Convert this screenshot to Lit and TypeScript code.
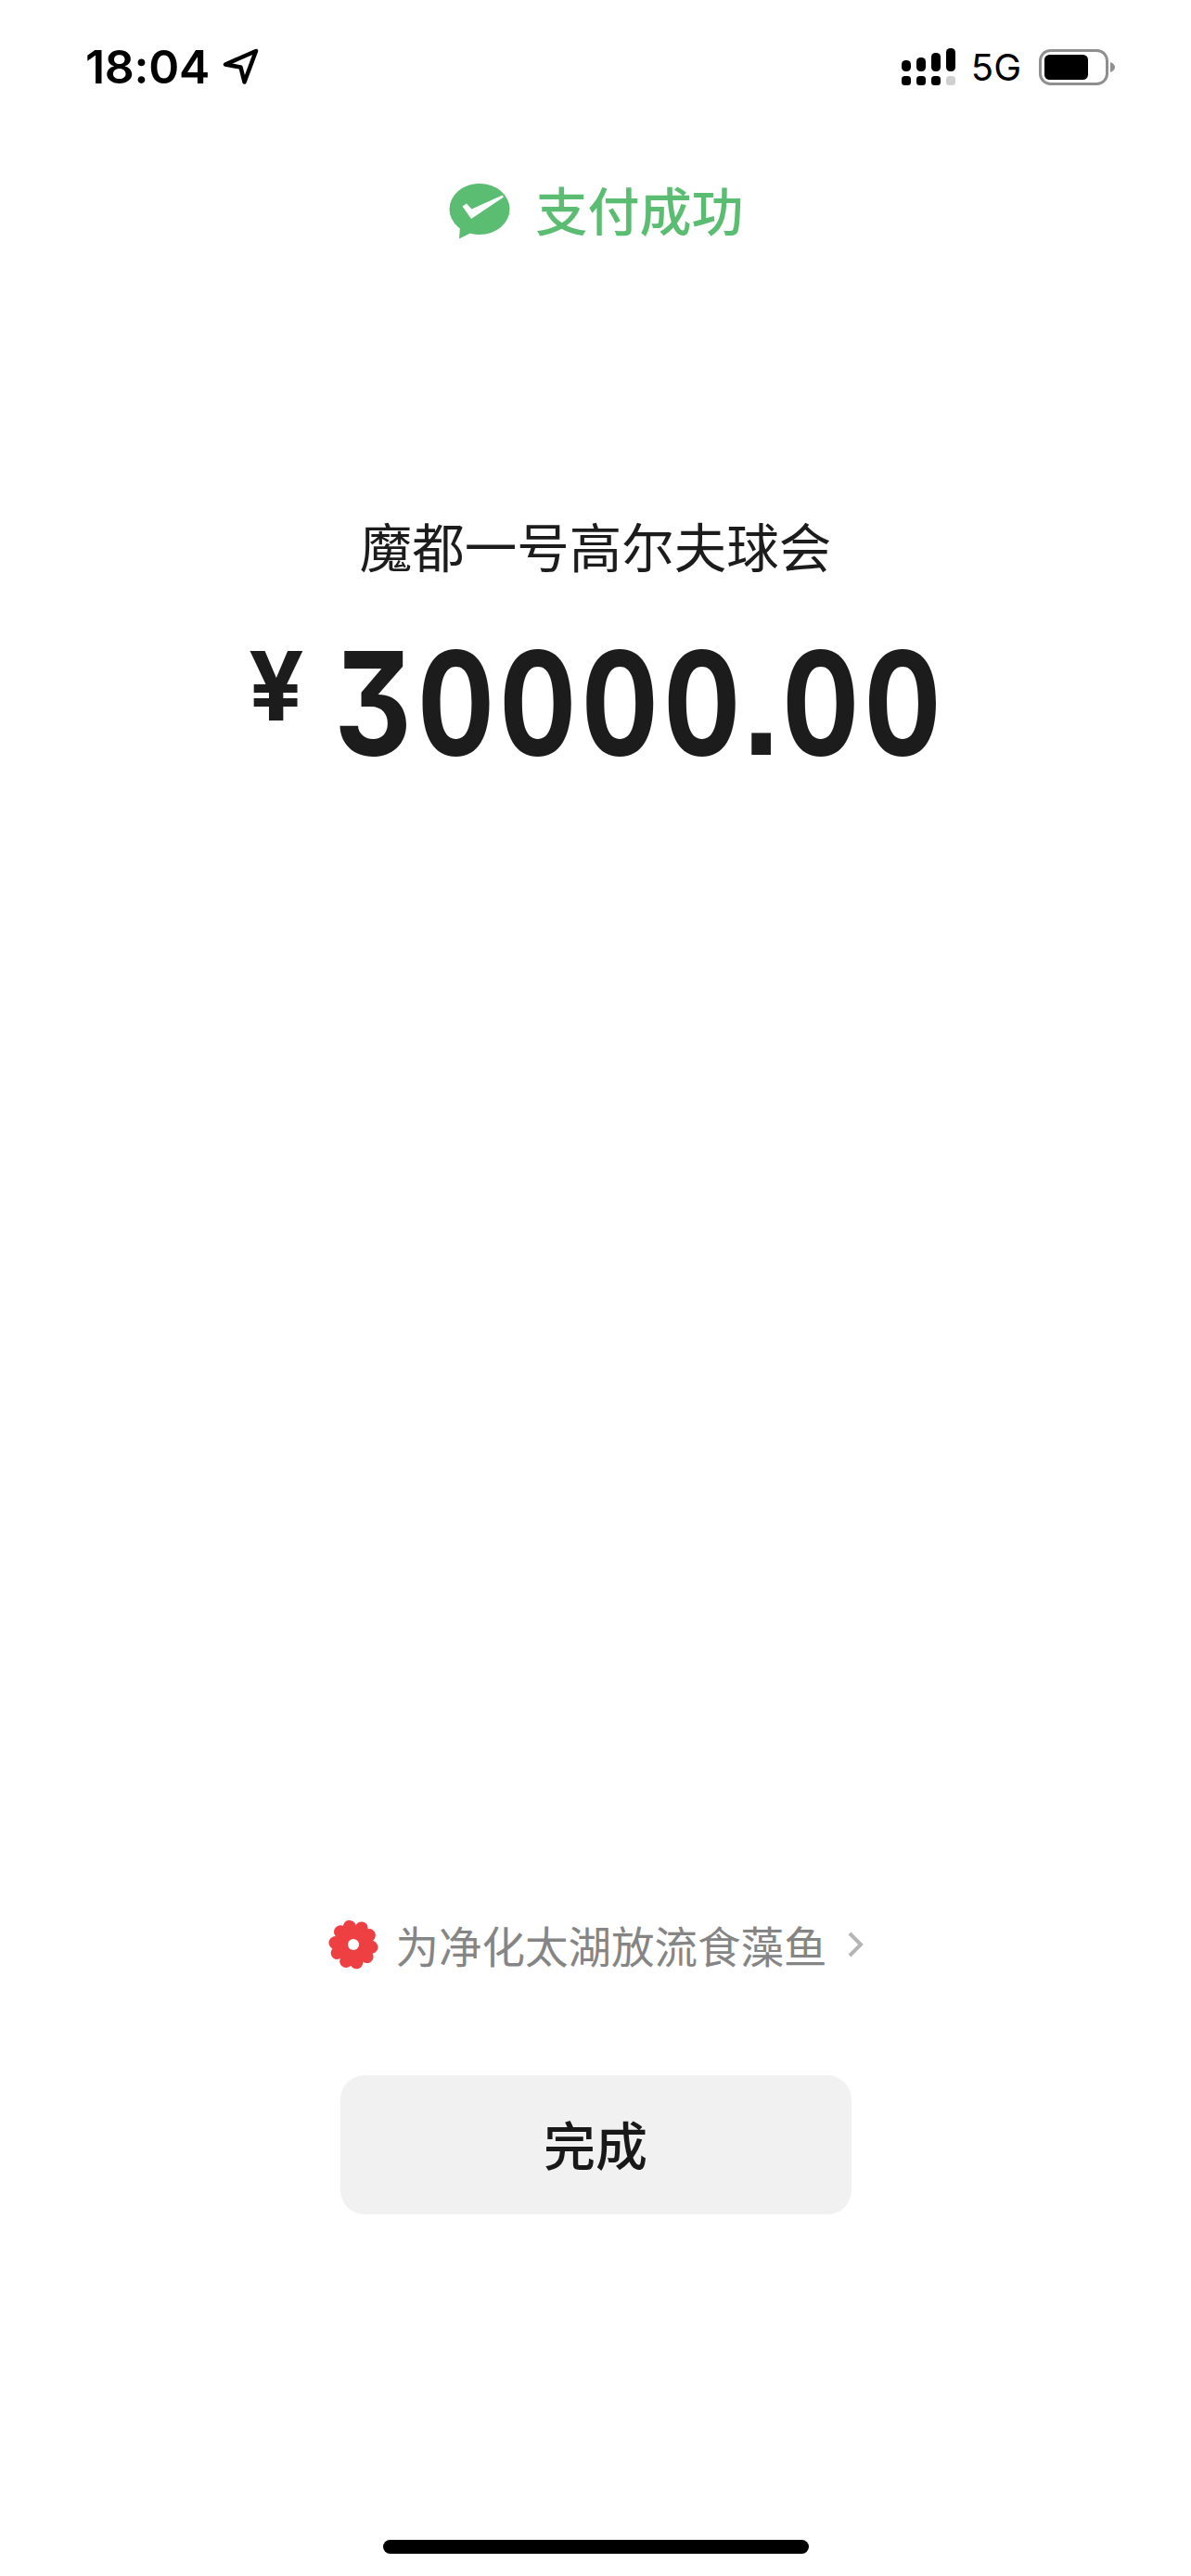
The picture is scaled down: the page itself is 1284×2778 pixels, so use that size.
import { LitElement, html, css, svg } from 'lit';
import { customElement, property } from 'lit/decorators.js';

// status bar glyphs
const arrowIcon = html`<svg class="arrow" width="40" height="40" viewBox="0 0 40 40">
  <path d="M3 17.5 L36 3 L23.5 36.5 L19.5 20.5 Z" fill="none" stroke="#000" stroke-width="4.5" stroke-linejoin="round"/>
</svg>`;

const signalTop = [12, 15, 20, 25];
const signalIcon = html`<svg width="58" height="40" viewBox="0 0 58 40">
  ${signalTop.map((h, i) => svg`
    <rect x=${i * 16} y=${25 - h} width="10" height=${h} rx="4.5" fill="#000"/>
    <rect x=${i * 16} y="30" width="10" height="10" rx="3.5" fill=${i === 3 ? '#cfcfcf' : '#000'}/>
  `)}
</svg>`;

const batteryIcon = html`<svg width="82" height="39" viewBox="0 0 82 39">
  <rect x="1.5" y="1.5" width="72" height="36" rx="11" fill="none" stroke="#8f8f8f" stroke-width="3"/>
  <rect x="6" y="6" width="47" height="27" rx="5.5" fill="#000"/>
  <path d="M77 14 C80 15 82 17 82 19.5 C82 22 80 24 77 25 Z" fill="#8f8f8f"/>
</svg>`;

const wechatIcon = html`<svg width="66" height="60" viewBox="0 0 66 60">
  <ellipse cx="33" cy="27.5" rx="32.5" ry="27.5" fill="#5bbd72"/>
  <path d="M12 46 L11 59.5 L26 52 Z" fill="#5bbd72"/>
  <path d="M14.5 24.5 L19 21.5 L24.5 27.5 L57.5 12.5 L59 14.5 L24 38 Z" fill="#fff"/>
</svg>`;

// five heart shaped petals
const flowerPetals = [7, 79, 151, 223, 295];
const flowerIcon = html`<svg width="54" height="54" viewBox="0 0 54 54">
  ${flowerPetals.map((deg) => svg`<g fill="#ee3f42" transform="rotate(${deg} 27 27)">
    <circle cx="20.5" cy="8.5" r="7"/>
    <circle cx="33.5" cy="8.5" r="7"/>
    <path d="M14 10 L40 10 L31 27 L23 27 Z"/>
  </g>`)}
  <circle cx="27" cy="27" r="11" fill="#ee3f42"/>
  <circle cx="27" cy="27" r="6" fill="#fff"/>
</svg>`;

@customElement('app-root')
export class AppRoot extends LitElement {
  static styles = css`
    :host {
      display: block;
      width: 1284px;
      height: 2778px;
      background: #fff;
      overflow: hidden;
    }

    .page {
      display: flex;
      flex-direction: column;
      align-items: center;
      height: 100%;
      font-family: "Noto Sans CJK SC", "Noto Sans", sans-serif;
    }

    /* Status bar */
    .status {
      display: flex;
      align-items: center;
      justify-content: space-between;
      align-self: stretch;
      box-sizing: border-box;
      height: 144px;
      padding-left: 92px;
      padding-right: 82px;
    }

    .status-left,
    .status-right {
      display: flex;
      align-items: center;
    }

    .time {
      font-family: Inter, sans-serif;
      font-size: 50px;
      font-weight: 600;
      color: #000;
      letter-spacing: -0.3px;
    }

    .arrow {
      margin-left: 14px;
    }

    .network {
      font-family: Inter, sans-serif;
      font-size: 40px;
      color: #000;
      margin: 0 19px 0 17px;
    }

    /* Header */
    .title {
      display: flex;
      align-items: center;
      gap: 28px;
      height: 168px;
      padding-left: 1px;
      font-size: 56px;
      line-height: 62px;
      font-weight: 500;
      color: #5bbd72;
    }

    .title span {
      margin-top: -6px;
    }

    .merchant {
      margin-top: 245px;
      height: 60px;
      line-height: 60px;
      font-size: 56.5px;
      color: #1c1c1c;
      font-weight: 400;
    }

    .amount {
      display: flex;
      align-items: center;
      justify-content: center;
      margin-top: 71px;
      padding-left: 10px;
      height: 140px;
      color: #1c1c1c;
      font-family: Inter, sans-serif;
      font-weight: 650;
      font-size: 154px;
      letter-spacing: 5.7px;
      font-feature-settings: "cv09", "tnum", "ss07";
      transform: scaleX(0.84);
    }

    .currency {
      font-size: 103px;
      font-weight: 700;
      letter-spacing: 0;
      margin-right: 46px;
      margin-top: -38px;
      transform: scaleX(1.21);
    }

    .spacer {
      flex: 1;
    }

    /* Promo link */
    .promo {
      display: flex;
      align-items: center;
      height: 60px;
      font-size: 46.5px;
      color: #858585;
    }

    .promo-text {
      margin: -2px 21px 0 19px;
    }

    .chevron {
      display: block;
    }

    .done {
      display: flex;
      align-items: center;
      justify-content: center;
      margin-top: 111px;
      box-sizing: border-box;
      padding-bottom: 5px;
      width: 551px;
      height: 150px;
      border-radius: 26px;
      background: #f1f1f1;
      font-size: 56px;
      font-weight: 500;
      color: #191919;
    }

    .home-indicator {
      margin-top: 351px;
      margin-bottom: 24px;
      width: 459px;
      height: 15px;
      border-radius: 8px;
      background: #000;
    }
  `;

  @property({ type: String }) merchant = '魔都一号高尔夫球会';
  @property({ type: String }) amount = '30000.00';
  @property({ type: String }) promo = '为净化太湖放流食藻鱼';

  render() {
    return html`
      <div class="page">
        <div class="status">
          <div class="status-left">
            <span class="time">18:04</span>
            ${arrowIcon}
          </div>
          <div class="status-right">
            ${signalIcon}
            <span class="network">5G</span>
            ${batteryIcon}
          </div>
        </div>

        <div class="title">${wechatIcon}<span>支付成功</span></div>
        <div class="merchant">${this.merchant}</div>
        <div class="amount">
          <span class="currency">¥</span>
          <span>${this.amount}</span>
        </div>

        <div class="spacer"></div>

        <div class="promo">
          ${flowerIcon}
          <span class="promo-text">${this.promo}</span>
          <svg class="chevron" width="18" height="28" viewBox="0 0 18 28">
            <path d="M3 2 L15 14 L3 26" fill="none" stroke="#b5b5b5" stroke-width="4"/>
          </svg>
        </div>
        <div class="done">完成</div>
        <div class="home-indicator"></div>
      </div>
    `;
  }
}
